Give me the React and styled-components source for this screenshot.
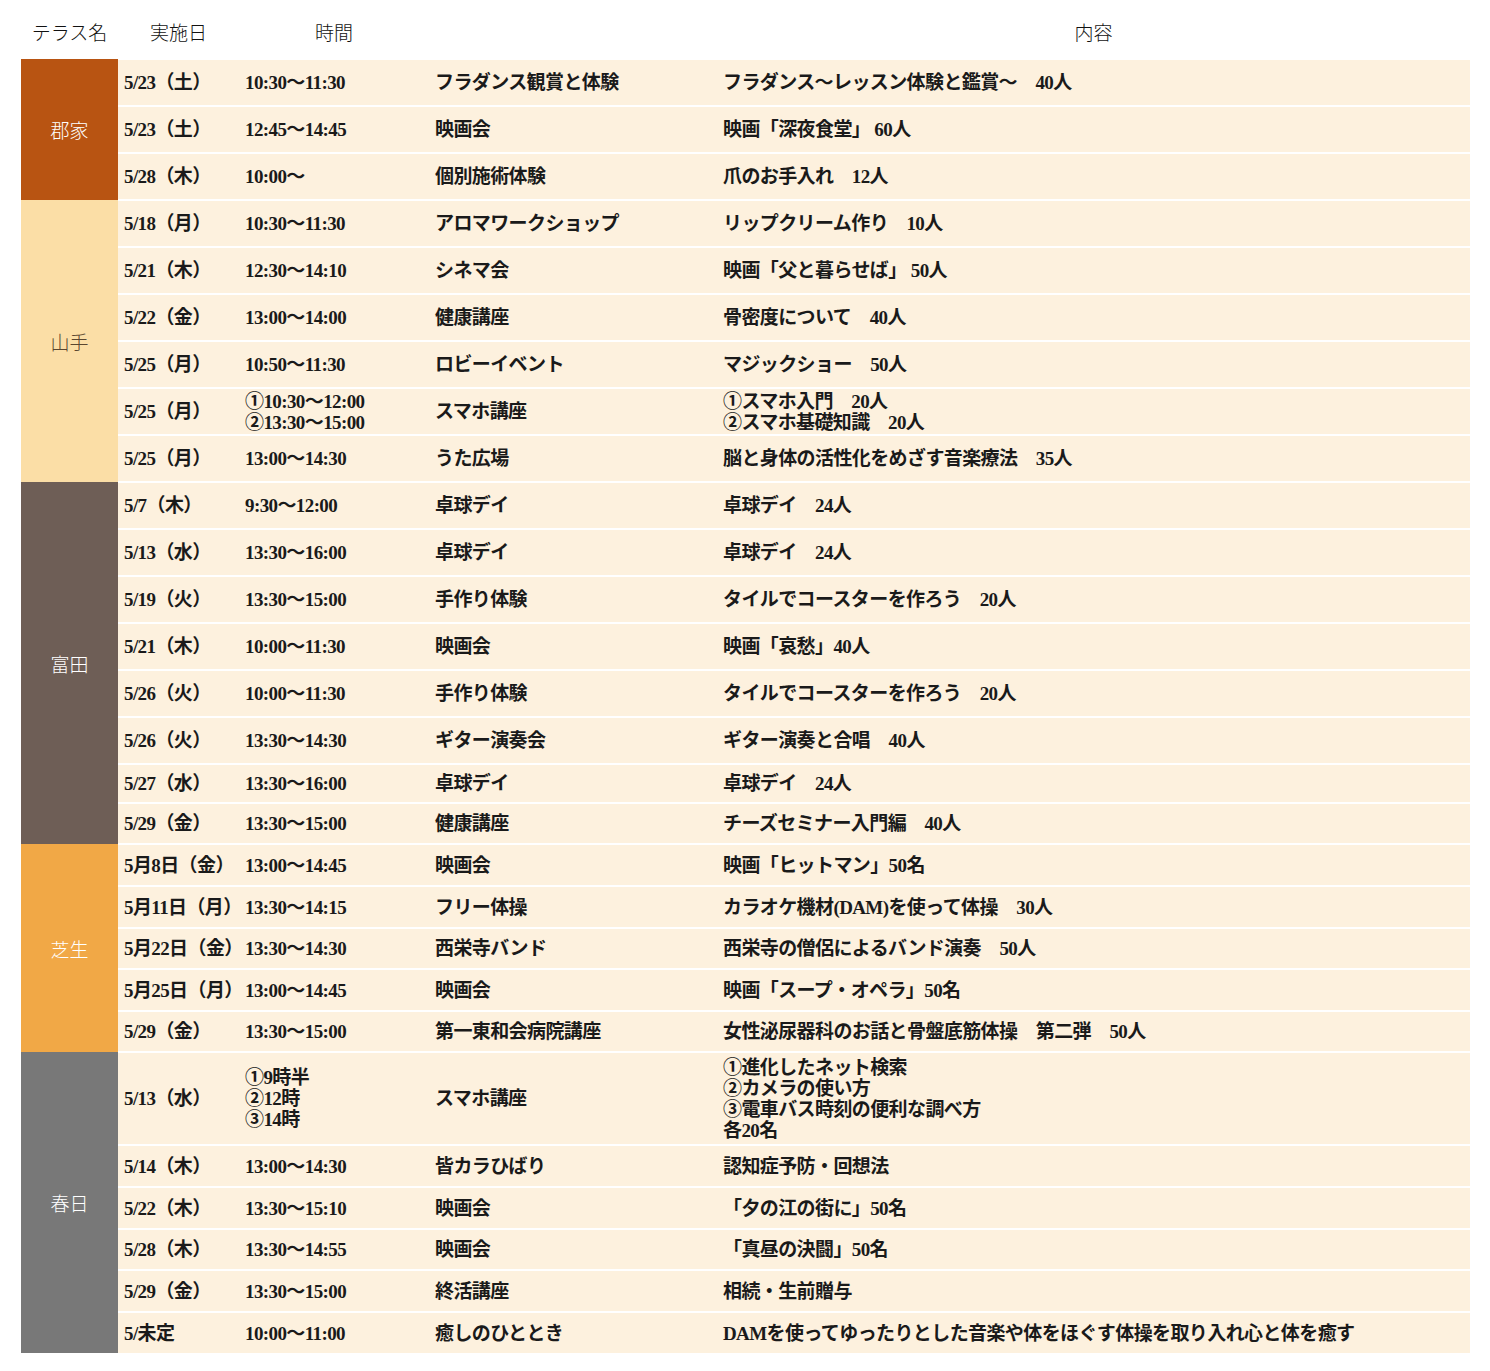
import React from 'react';
import styled, { createGlobalStyle } from 'styled-components';

const Global = createGlobalStyle`
  body { margin: 8px; background: #fff; }
`;

const Table = styled.table`
  margin: 0 0 0 13px;
  width: 1449px;
  border-collapse: collapse;
  table-layout: fixed;
  font-family: "Liberation Serif", "Noto Sans CJK JP", serif;
`;

const Head = styled.th`
  height: 46px;
  font-family: "Noto Sans CJK JP", sans-serif;
  font-weight: 300;
  font-size: 19px;
  color: #111;
  text-align: center;
  padding: 0 0 4px;
`;

const Terrace = styled.td`
  background: ${(p) => p.$bg};
  color: ${(p) => p.$fg || '#fff'};
  font-family: "Noto Sans CJK JP", sans-serif;
  font-weight: 300;
  font-size: 19px;
  text-align: center;
  padding: 0;
  border: none;
`;

const Row = styled.tr`
  height: ${(p) => p.$h}px;
`;

const Cell = styled.td`
  background: #fdf1de;
  border-top: 2px solid #fff;
  padding: 0 0 0 6px;
  font-size: 19px;
  font-weight: 700;
  color: #1a1a1a;
  line-height: 21px;
  letter-spacing: -0.6px;
  white-space: nowrap;
  vertical-align: middle;
`;

const groups = [
  { name: '郡家', bg: '#b85412', rows: [
    [47, '5/23（土）', '10:30～11:30', 'フラダンス観賞と体験', 'フラダンス～レッスン体験と鑑賞～　40人'],
    [47, '5/23（土）', '12:45～14:45', '映画会', '映画「深夜食堂」 60人'],
    [47, '5/28（木）', '10:00～', '個別施術体験', '爪のお手入れ　12人'],
  ]},
  { name: '山手', bg: '#fbdea6', fg: '#5a4630', rows: [
    [47, '5/18（月）', '10:30～11:30', 'アロマワークショップ', 'リップクリーム作り　10人'],
    [47, '5/21（木）', '12:30～14:10', 'シネマ会', '映画「父と暮らせば」 50人'],
    [47, '5/22（金）', '13:00～14:00', '健康講座', '骨密度について　40人'],
    [47, '5/25（月）', '10:50～11:30', 'ロビーイベント', 'マジックショー　50人'],
    [47, '5/25（月）', '①10:30～12:00\n②13:30～15:00', 'スマホ講座', '①スマホ入門　20人\n②スマホ基礎知識　20人'],
    [47, '5/25（月）', '13:00～14:30', 'うた広場', '脳と身体の活性化をめざす音楽療法　35人'],
  ]},
  { name: '富田', bg: '#6e5e56', rows: [
    [47, '5/7（木）', '9:30～12:00', '卓球デイ', '卓球デイ　24人'],
    [47, '5/13（水）', '13:30～16:00', '卓球デイ', '卓球デイ　24人'],
    [47, '5/19（火）', '13:30～15:00', '手作り体験', 'タイルでコースターを作ろう　20人'],
    [47, '5/21（木）', '10:00～11:30', '映画会', '映画「哀愁」40人'],
    [47, '5/26（火）', '10:00～11:30', '手作り体験', 'タイルでコースターを作ろう　20人'],
    [47, '5/26（火）', '13:30～14:30', 'ギター演奏会', 'ギター演奏と合唱　40人'],
    [39, '5/27（水）', '13:30～16:00', '卓球デイ', '卓球デイ　24人'],
    [41, '5/29（金）', '13:30～15:00', '健康講座', 'チーズセミナー入門編　40人'],
  ]},
  { name: '芝生', bg: '#f1a846', rows: [
    [42, '5月8日（金）', '13:00～14:45', '映画会', '映画「ヒットマン」50名'],
    [42, '5月11日（月）', '13:30～14:15', 'フリー体操', 'カラオケ機材(DAM)を使って体操　30人'],
    [41, '5月22日（金）', '13:30～14:30', '西栄寺バンド', '西栄寺の僧侶によるバンド演奏　50人'],
    [42, '5月25日（月）', '13:00～14:45', '映画会', '映画「スープ・オペラ」50名'],
    [41, '5/29（金）', '13:30～15:00', '第一東和会病院講座', '女性泌尿器科のお話と骨盤底筋体操　第二弾　50人'],
  ]},
  { name: '春日', bg: '#787878', rows: [
    [93, '5/13（水）', '①9時半\n②12時\n③14時', 'スマホ講座', '①進化したネット検索\n②カメラの使い方\n③電車バス時刻の便利な調べ方\n各20名'],
    [42, '5/14（木）', '13:00～14:30', '皆カラひばり', '認知症予防・回想法'],
    [42, '5/22（木）', '13:30～15:10', '映画会', '「夕の江の街に」50名'],
    [41, '5/28（木）', '13:30～14:55', '映画会', '「真昼の決闘」50名'],
    [42, '5/29（金）', '13:30～15:00', '終活講座', '相続・生前贈与'],
    [41, '5/未定', '10:00～11:00', '癒しのひととき', 'DAMを使ってゆったりとした音楽や体をほぐす体操を取り入れ心と体を癒す'],
  ]},
];

const Lines = ({ text }) =>
  text.split('\n').map((l, i) => (
    <React.Fragment key={i}>
      {i > 0 && <br />}
      {l}
    </React.Fragment>
  ));

export default function App() {
  return (
    <>
      <Global />
      <Table>
        <colgroup>
          <col style={{ width: 97 }} />
          <col style={{ width: 121 }} />
          <col style={{ width: 190 }} />
          <col style={{ width: 288 }} />
          <col />
        </colgroup>
        <thead>
          <tr>
            <Head>テラス名</Head>
            <Head>実施日</Head>
            <Head>時間</Head>
            <Head></Head>
            <Head>内容</Head>
          </tr>
        </thead>
        <tbody>
          {groups.map((g) =>
            g.rows.map(([h, date, time, event, content], i) => (
              <Row key={g.name + i} $h={h}>
                {i === 0 && (
                  <Terrace rowSpan={g.rows.length} $bg={g.bg} $fg={g.fg}>
                    {g.name}
                  </Terrace>
                )}
                <Cell>{date}</Cell>
                <Cell><Lines text={time} /></Cell>
                <Cell>{event}</Cell>
                <Cell><Lines text={content} /></Cell>
              </Row>
            ))
          )}
        </tbody>
      </Table>
    </>
  );
}
